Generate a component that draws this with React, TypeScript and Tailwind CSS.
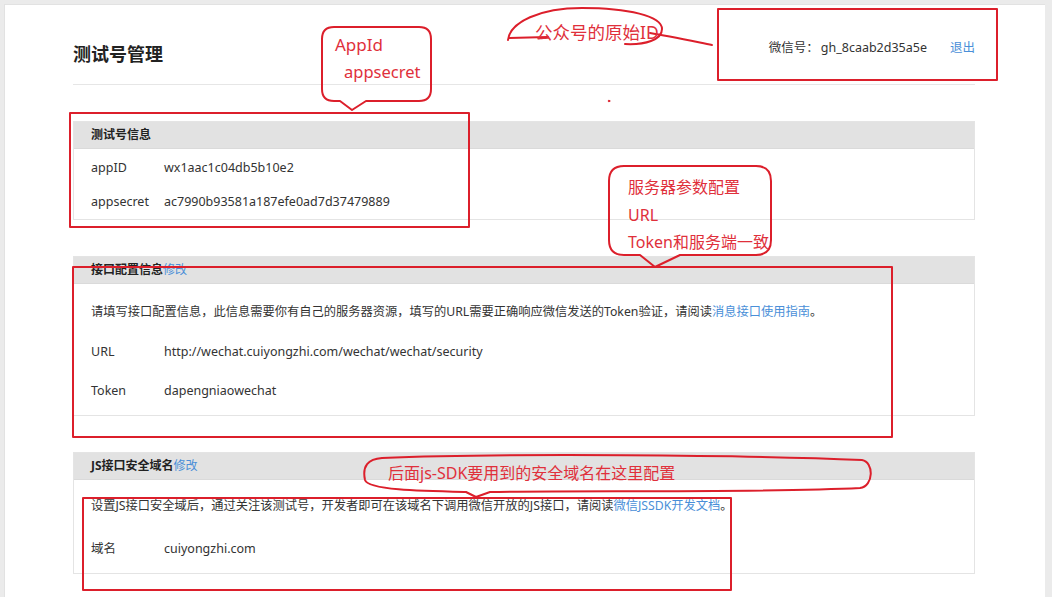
import React from 'react';

const font = { fontFamily: "'Noto Sans', 'Noto Sans CJK SC', sans-serif" };

function Panel({ title, edit, children }: { title: string; edit?: boolean; children: React.ReactNode }) {
  return (
    <div className="border border-[#e4e4e4] bg-white">
      <div className="flex h-[27px] items-center border-b border-[#dadada] bg-[#e2e2e2] pl-[17px] text-[12px] font-bold text-[#222]">
        {title}
        {edit && <span className="font-normal text-[#4a8fd8]">修改</span>}
      </div>
      {children}
    </div>
  );
}

function Row({ label, value, h = 'h-[34px]' }: { label: string; value: string; h?: string }) {
  return (
    <div className={`flex items-center pl-[17px] text-[12.5px] text-[#333] ${h}`}>
      <div className="w-[73px]">{label}</div>
      <div>{value}</div>
    </div>
  );
}

export default function App() {
  return (
    <div className="relative h-[597px] w-[1052px] overflow-hidden bg-[#ebebeb] pl-1 pr-[7px] pt-1" style={font}>
      <div className="h-full border-l border-t border-[#e2e2e2] bg-white pl-[68px]">
        <div className="w-[902px]">
          <div className="flex h-[80px] items-start justify-between border-b border-[#e6e6e6]">
            <div className="mt-[37px] text-[18px] font-bold leading-6 text-[#222]">测试号管理</div>
            <div className="mt-[34px] flex text-[12.5px] leading-[18px] text-[#333]">
              <span>微信号：</span>
              <span className="ml-[2px]">gh_8caab2d35a5e</span>
              <span className="ml-[23px] text-[#4a8fd8]">退出</span>
            </div>
          </div>

          <div className="mt-[36px]">
            <Panel title="测试号信息">
              <div className="pt-[2px]">
                <Row label="appID" value="wx1aac1c04db5b10e2" />
                <Row label="appsecret" value="ac7990b93581a187efe0ad7d37479889" />
              </div>
            </Panel>
          </div>

          <div className="mt-[36px]">
            <Panel title="接口配置信息" edit>
              <div className="pb-[4px] pt-[9px]">
                <div className="flex h-[39px] items-center pl-[17px] text-[12.25px] text-[#333]">
                  请填写接口配置信息，此信息需要你有自己的服务器资源，填写的URL需要正确响应微信发送的Token验证，请阅读
                  <span className="text-[#4a8fd8]">消息接口使用指南</span>。
                </div>
                <Row label="URL" value="http://wechat.cuiyongzhi.com/wechat/wechat/security" h="h-[40px]" />
                <Row label="Token" value="dapengniaowechat" h="h-[39px]" />
              </div>
            </Panel>
          </div>

          <div className="mt-[36px]">
            <Panel title="JS接口安全域名" edit>
              <div className="pb-[1px] pt-[7px]">
                <div className="flex h-[39px] items-center pl-[17px] text-[12.25px] text-[#333]">
                  设置JS接口安全域后，通过关注该测试号，开发者即可在该域名下调用微信开放的JS接口，请阅读
                  <span className="text-[#4a8fd8]">微信JSSDK开发文档</span>。
                </div>
                <Row label="域名" value="cuiyongzhi.com" h="h-[46px]" />
              </div>
            </Panel>
          </div>
        </div>
      </div>

      {/* hand-drawn annotations */}
      <svg className="pointer-events-none absolute left-0 top-0" width="1052" height="597" fill="none" stroke="#dc1f2b" strokeWidth="2" strokeLinejoin="round" strokeLinecap="round">
        <path d="M334,27 H419 Q431,27 431,39 V89 Q431,101 419,101 H366 L352,110 L340,101 H334 Q322,101 322,89 V39 Q322,27 334,27 Z" />
        <rect x="70" y="113" width="399" height="114" />
        <path d="M508,40 C510,22 540,8 582,8 C628,8 662,16 662,29 C662,40 645,45 625,44" />
        <path d="M509,38 L548,37" />
        <path d="M650,33 C668,36 692,41 712,45" />
        <rect x="718" y="9" width="279" height="71" />
        <circle cx="609" cy="101" r="0.8" fill="#dc1f2b" strokeWidth="1" />
        <path d="M624,166 H756 Q771,166 771,181 V240 Q771,255 756,255 H680 L655,267 L640,255 H624 Q609,255 609,240 V181 Q609,166 624,166 Z" />
        <rect x="73" y="267" width="819" height="170" />
        <path d="M382,458 C500,453 750,455 862,460 C874,462 874,486 860,488 C760,493 560,490 490,492 L476,497 L466,492 C420,491 368,490 365,480 C362,466 368,459 382,458 Z" />
        <rect x="83" y="498" width="648" height="92" />
      </svg>

      <div className="pointer-events-none absolute left-[335px] top-[34px] text-[17px] leading-[22px] text-[#e0303b]">AppId</div>
      <div className="pointer-events-none absolute left-[344px] top-[61px] text-[16.5px] leading-[22px] text-[#e0303b]">appsecret</div>
      <div className="pointer-events-none absolute left-[535px] top-[21px] text-[17.5px] leading-[22px] text-[#e0303b]">公众号的原始ID</div>
      <div className="pointer-events-none absolute left-[628px] top-[174px] flex flex-col text-[16px] leading-[27.5px] text-[#e0303b]">
        <span>服务器参数配置</span>
        <span>URL</span>
        <span>Token和服务端一致</span>
      </div>
      <div className="pointer-events-none absolute left-[388px] top-[462px] text-[16px] leading-[22px] text-[#e0303b]">后面js-SDK要用到的安全域名在这里配置</div>
    </div>
  );
}
